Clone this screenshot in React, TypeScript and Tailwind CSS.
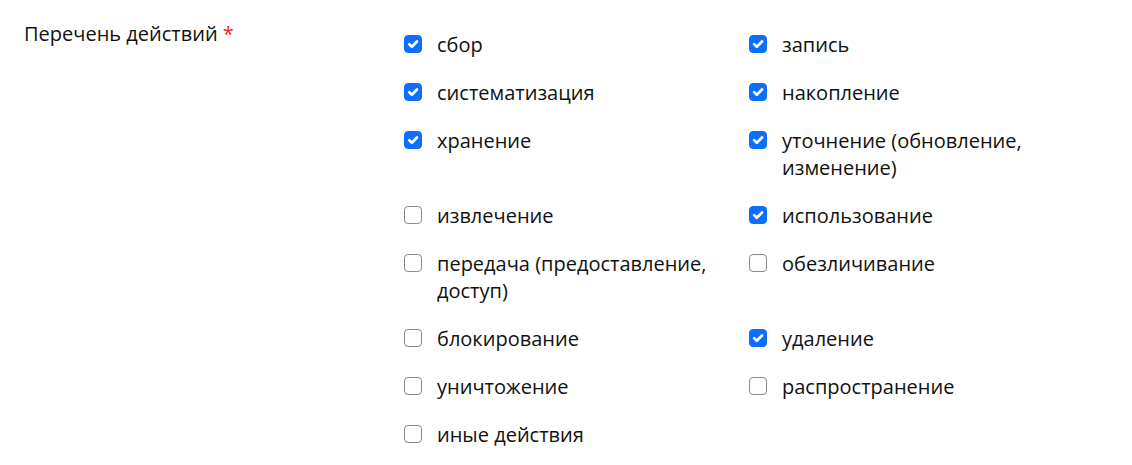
import { useState } from 'react'

const ACTIONS: { label: string; checked: boolean }[] = [
  { label: 'сбор', checked: true },
  { label: 'запись', checked: true },
  { label: 'систематизация', checked: true },
  { label: 'накопление', checked: true },
  { label: 'хранение', checked: true },
  { label: 'уточнение (обновление, изменение)', checked: true },
  { label: 'извлечение', checked: false },
  { label: 'использование', checked: true },
  { label: 'передача (предоставление, доступ)', checked: false },
  { label: 'обезличивание', checked: false },
  { label: 'блокирование', checked: false },
  { label: 'удаление', checked: true },
  { label: 'уничтожение', checked: false },
  { label: 'распространение', checked: false },
  { label: 'иные действия', checked: false },
]

function Check({ checked, onClick }: { checked: boolean; onClick: () => void }) {
  return (
    <button
      type="button"
      onClick={onClick}
      className={`mt-[4px] w-[18px] h-[18px] shrink-0 rounded-[4px] flex items-center justify-center ${
        checked ? 'bg-[#0d6efd] border border-[#0d6efd]' : 'bg-white border border-[#8a8a8a]'
      }`}
    >
      {checked && (
        <svg viewBox="0 0 20 20" width="20" height="20" fill="none">
          <path d="m5.2 10.2 3.3 3.3 6.5-6.6" stroke="#fff" strokeWidth="3.4" strokeLinecap="round" strokeLinejoin="round" />
        </svg>
      )}
    </button>
  )
}

export default function App() {
  const [items, setItems] = useState(ACTIONS)

  const toggle = (i: number) =>
    setItems((prev) => prev.map((it, idx) => (idx === i ? { ...it, checked: !it.checked } : it)))

  return (
    <div
      className="bg-white w-[1132px] h-[465px] flex pl-6 pt-[20px] text-[20px] leading-[27px] text-[#111]"
      style={{ fontFamily: '"Open Sans", "Noto Sans", sans-serif' }}
    >
      {/* Label */}
      <div className="w-[380px] shrink-0">
        Перечень действий <span className="text-[#ee1c25]">*</span>
      </div>

      {/* Options */}
      <div className="grid grid-cols-[345px_345px] gap-y-[21px] mt-[11px] content-start">
        {items.map((it, i) => (
          <label key={it.label} className="flex items-start gap-[15px] pr-8 cursor-pointer select-none">
            <Check checked={it.checked} onClick={() => toggle(i)} />
            <span onClick={() => toggle(i)}>{it.label}</span>
          </label>
        ))}
      </div>
    </div>
  )
}
